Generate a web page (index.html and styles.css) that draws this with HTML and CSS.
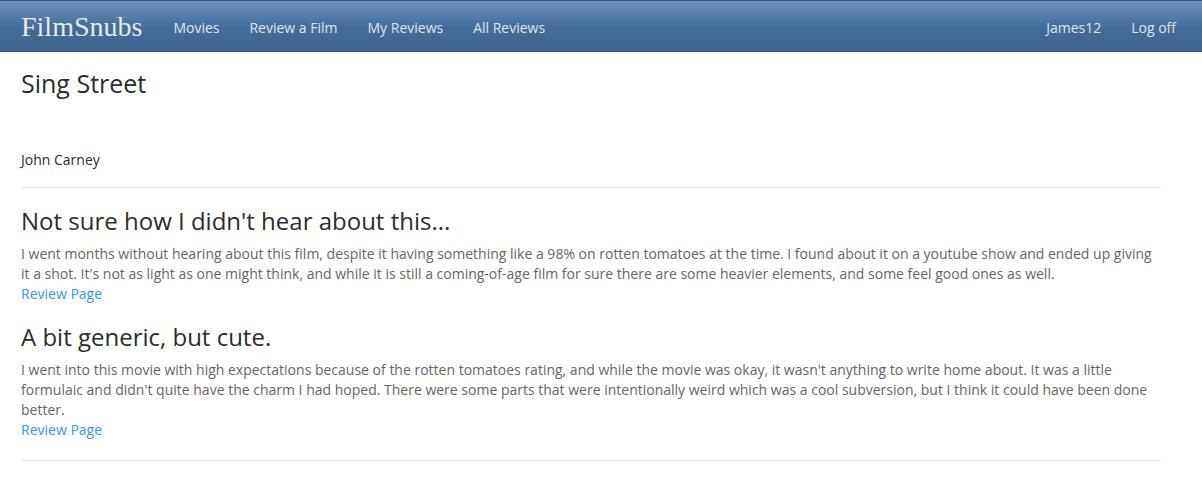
FILE: index.html
```html
<!DOCTYPE html>
<html lang="en">
<head>
<meta charset="utf-8">
<title>Sing Street - FilmSnubs</title>
<link rel="stylesheet" href="styles.css">
</head>
<body>
<nav class="navbar">
  <div class="navbar-inner">
    <a class="brand" href="#">FilmSnubs</a>
    <ul class="nav">
      <li><a href="#">Movies</a></li>
      <li><a href="#">Review a Film</a></li>
      <li><a href="#">My Reviews</a></li>
      <li><a href="#">All Reviews</a></li>
    </ul>
    <ul class="nav nav-right">
      <li><a href="#">James12</a></li>
      <li><a href="#">Log off</a></li>
    </ul>
  </div>
</nav>
<main class="container">
  <h2 class="title">Sing Street</h2>
  <p class="director">John Carney</p>
  <hr>
  <section class="review">
    <h3>Not sure how I didn't hear about this...</h3>
    <p>I went months without hearing about this film, despite it having something like a 98% on rotten tomatoes at the time. I found about it on a youtube show and ended up giving it a shot. It's not as light as one might think, and while it is still a coming-of-age film for sure there are some heavier elements, and some feel good ones as well.<br><a href="#">Review Page</a></p>
  </section>
  <section class="review">
    <h3>A bit generic, but cute.</h3>
    <p>I went into this movie with high expectations because of the rotten tomatoes rating, and while the movie was okay, it wasn't anything to write home about. It was a little formulaic and didn't quite have the charm I had hoped. There were some parts that were intentionally weird which was a cool subversion, but I think it could have been done better.<br><a href="#">Review Page</a></p>
  </section>
  <hr>
</main>
</body>
</html>
```

FILE: styles.css
```css
* { box-sizing: border-box; }
html, body { margin: 0; padding: 0; }
body {
  font-family: "Open Sans", "Liberation Sans", sans-serif;
  font-size: 14px;
  line-height: 20px;
  color: #666666;
  background: #ffffff;
}
a { color: #3399f3; text-decoration: none; }

.navbar {
  background-image: linear-gradient(#6d94bf, #446e9b 50%, #3e648d);
  border-top: 1px solid #345578;
  border-bottom: 1px solid #345578;
}
.navbar-inner {
  display: flex;
  align-items: center;
  height: 50px;
  padding: 0 11px 0 21px;
}
.brand {
  font-family: "Liberation Serif", "Times New Roman", serif;
  font-size: 28px;
  line-height: 50px;
  color: #e8e8e8;
  margin-right: 16px;
  padding-top: 1px;
}
.nav {
  display: flex;
  list-style: none;
  margin: 0;
  padding: 0;
}
.nav a {
  display: block;
  padding: 17px 15px 13px;
  line-height: 20px;
  color: #e2e2e2;
}
.nav-right { margin-left: auto; }

.container {
  width: 1140px;
  margin-left: 21px;
}
.title {
  font-size: 25px;
  font-weight: 400;
  line-height: 26px;
  color: #2d2d2d;
  margin: 18px 0 0;
}
.director {
  color: #2d2d2d;
  margin: 54px 0 0;
}
hr {
  border: 0;
  border-top: 1px solid #e6e6e6;
  margin: 17px 0 20px;
}
.review h3 {
  font-size: 24px;
  font-weight: 400;
  line-height: 26px;
  color: #2d2d2d;
  margin: 0 0 10px;
}
.review p { margin: 0 0 20px; }
.review + hr { margin-top: 20px; }
```
